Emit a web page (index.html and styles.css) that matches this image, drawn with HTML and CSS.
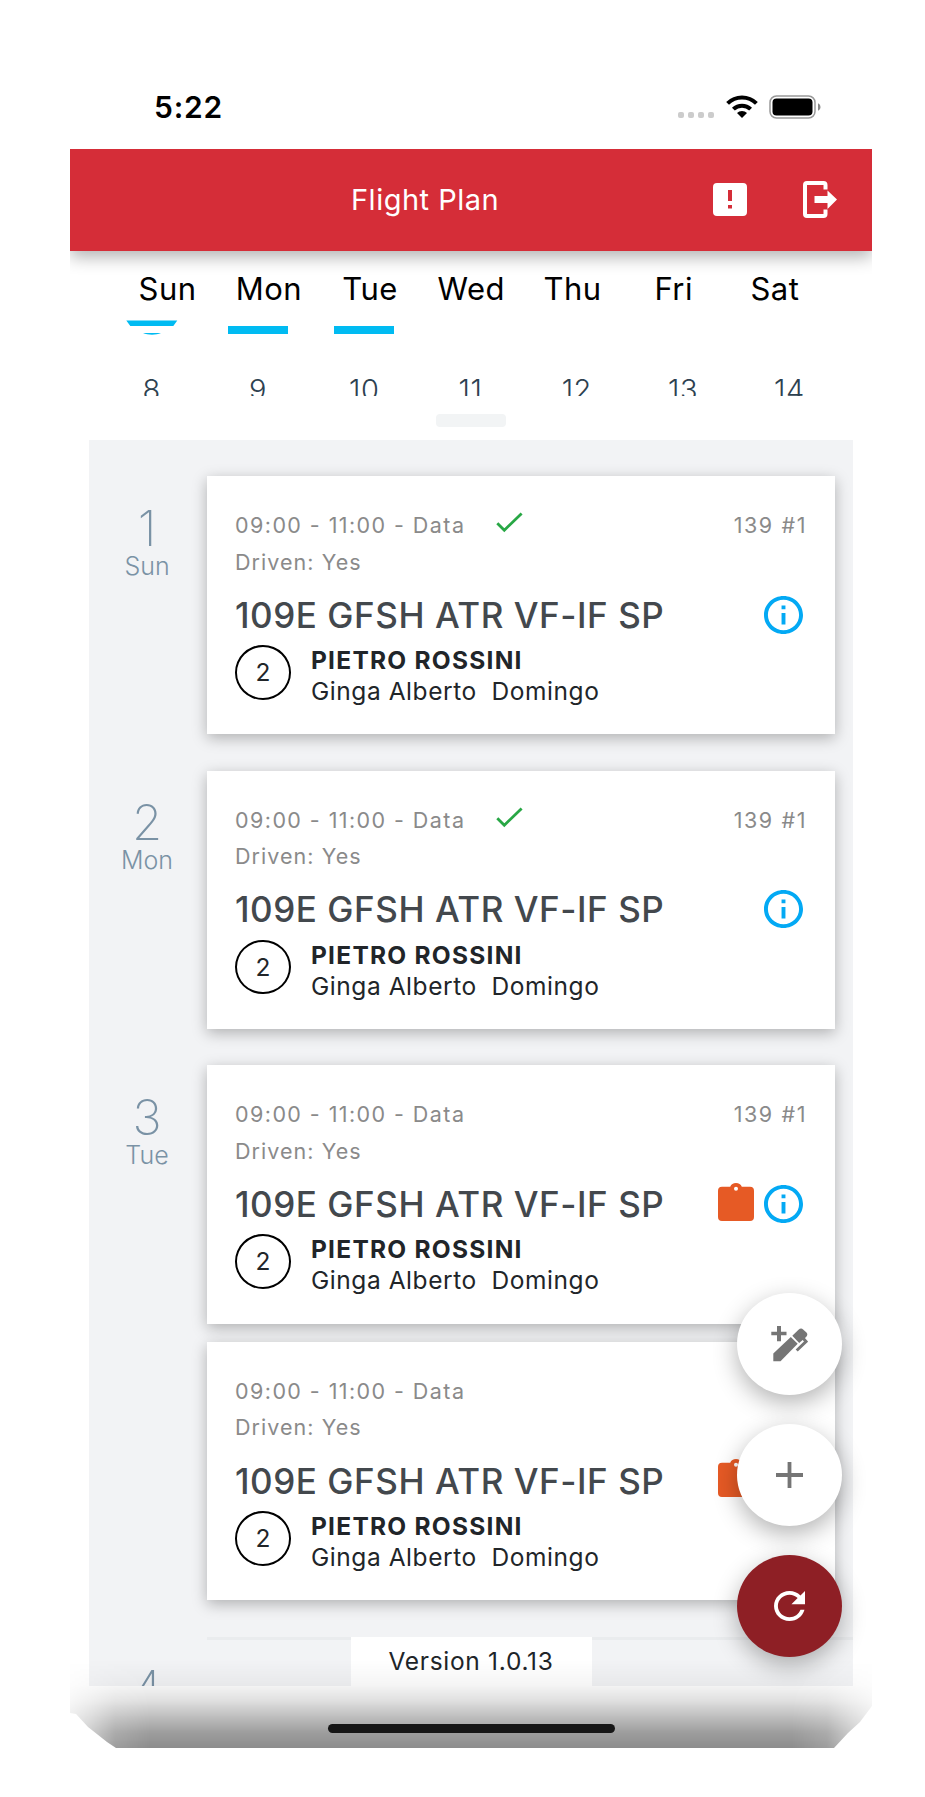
FILE: index.html
```html
<!DOCTYPE html>
<html lang="en">
<head>
    <meta charset="UTF-8">
    <meta name="viewport" content="width=device-width, initial-scale=1.0">
    <title>Flight Plan</title>
    <link rel="stylesheet" href="styles.css">
</head>
<body>
    <!-- Shared icons -->
    <svg class="sprite">
        <symbol id="check" viewBox="0 0 27 21">
            <path d="M1.3 11.2l7 7L25.6 1.4" fill="none" stroke="#28a745" stroke-width="2.8"/>
        </symbol>
        <symbol id="info" viewBox="2 2 20 20" preserveAspectRatio="none">
            <path fill="#03a9f4" d="M11 7h2v2h-2zm0 4h2v6h-2zm1-9C6.48 2 2 6.48 2 12s4.48 10 10 10 10-4.48 10-10S17.52 2 12 2zm0 18c-4.41 0-8-3.59-8-8s3.59-8 8-8 8 3.59 8 8-3.59 8-8 8z"/>
        </symbol>
        <symbol id="clipboard" viewBox="0 0 36 38">
            <path fill="#e65a25" fill-rule="evenodd" d="M4 3.700h8.200c1-2.400 3-3.700 5.800-3.700s4.800 1.300 5.800 3.700H32a4 4 0 0 1 4 4V34a4 4 0 0 1-4 4H4a4 4 0 0 1-4-4V7.700a4 4 0 0 1 4-4zM18 3.800a2 2 0 1 0 0 4 2 2 0 0 0 0-4z"/>
        </symbol>
    </svg>

    <div class="phone">
        <div class="status-bar">
            <span class="clock">5:22</span>
            <div class="status-icons">
                <span class="dots"><i></i><i></i><i></i><i></i></span>
                <svg class="wifi" viewBox="0 0 32 23">
                    <path d="M1.600 8.400a20.400 20.400 0 0 1 28.800 0M7.400 14.200a12.200 12.200 0 0 1 17.200 0" fill="none" stroke="#000" stroke-width="4"/>
                    <path d="M16 23l-5-5a7 7 0 0 1 10 0z"/>
                </svg>
                <svg class="battery" viewBox="0 0 52 24">
                    <rect x="1" y="1" width="45" height="22" rx="6.500" fill="none" stroke="#999" stroke-width="1.500"/>
                    <rect x="3.500" y="3.500" width="40" height="17" rx="4"/>
                    <path d="M49 8.200c3.300 1.500 3.300 6.100 0 7.600z" fill="#888"/>
                </svg>
            </div>
        </div>

        <div class="navbar">
            <h2>Flight Plan</h2>
            <svg class="alert-icon" viewBox="0 0 34 33">
                <path fill="#fff" fill-rule="evenodd" d="M4 0h26a4 4 0 0 1 4 4v25a4 4 0 0 1-4 4H4a4 4 0 0 1-4-4V4a4 4 0 0 1 4-4zM15 7v11h4V7zM15 22v3.500h4V22z"/>
            </svg>
            <svg class="logout-icon" viewBox="0 0 34 37">
                <path d="M22.500 8.500V4a2 2 0 0 0-2-2H4a2 2 0 0 0-2 2v29a2 2 0 0 0 2 2h16.500a2 2 0 0 0 2-2v-4.500" fill="none" stroke="#fff" stroke-width="4"/>
                <path fill="#fff" d="M11.500 15h13V9.500L34 18.500 24.500 28v-6h-13z"/>
            </svg>
        </div>

        <div class="calendar">
            <div class="weekdays">
                <span>Sun</span><span>Mon</span><span>Tue</span><span>Wed</span><span>Thu</span><span>Fri</span><span>Sat</span>
            </div>
            <div class="marks">
                <svg viewBox="0 0 52 16"><path fill="#00bbf2" d="M.300.500h51l-4 5.500h-43zM17 13h18c-5 2.300-13 2.300-18 0z"/></svg>
                <span class="bar"></span>
                <span class="bar"></span>
            </div>
            <div class="dates">
                <span>8</span><span>9</span><span>10</span><span>11</span><span>12</span><span>13</span><span>14</span>
            </div>
            <div class="knob"></div>
        </div>

        <div class="agenda">
            <div class="day">
                <div class="day-label"><b>1</b><span>Sun</span></div>
                <div class="cards">
                    <div class="card">
                        <div class="row meta"><span class="time">09:00 - 11:00 - Data</span><svg class="check"><use href="#check"/></svg><span class="code">139 #1</span></div>
                        <div class="meta driven">Driven: Yes</div>
                        <div class="row title"><h3>109E GFSH ATR VF-IF SP</h3><svg class="info"><use href="#info"/></svg></div>
                        <div class="row crew"><span class="count">2</span><p><strong>PIETRO ROSSINI</strong>Ginga Alberto&nbsp; Domingo</p></div>
                    </div>
                </div>
            </div>
            <div class="day">
                <div class="day-label"><b>2</b><span>Mon</span></div>
                <div class="cards">
                    <div class="card">
                        <div class="row meta"><span class="time">09:00 - 11:00 - Data</span><svg class="check"><use href="#check"/></svg><span class="code">139 #1</span></div>
                        <div class="meta driven">Driven: Yes</div>
                        <div class="row title"><h3>109E GFSH ATR VF-IF SP</h3><svg class="info"><use href="#info"/></svg></div>
                        <div class="row crew"><span class="count">2</span><p><strong>PIETRO ROSSINI</strong>Ginga Alberto&nbsp; Domingo</p></div>
                    </div>
                </div>
            </div>
            <div class="day">
                <div class="day-label"><b>3</b><span>Tue</span></div>
                <div class="cards">
                    <div class="card">
                        <div class="row meta"><span class="time">09:00 - 11:00 - Data</span><span class="code">139 #1</span></div>
                        <div class="meta driven">Driven: Yes</div>
                        <div class="row title"><h3>109E GFSH ATR VF-IF SP</h3><svg class="clipboard"><use href="#clipboard"/></svg><svg class="info"><use href="#info"/></svg></div>
                        <div class="row crew"><span class="count">2</span><p><strong>PIETRO ROSSINI</strong>Ginga Alberto&nbsp; Domingo</p></div>
                    </div>
                    <div class="card">
                        <div class="row meta"><span class="time">09:00 - 11:00 - Data</span></div>
                        <div class="meta driven">Driven: Yes</div>
                        <div class="row title"><h3>109E GFSH ATR VF-IF SP</h3><svg class="clipboard"><use href="#clipboard"/></svg><svg class="info"><use href="#info"/></svg></div>
                        <div class="row crew"><span class="count">2</span><p><strong>PIETRO ROSSINI</strong>Ginga Alberto&nbsp; Domingo</p></div>
                    </div>
                </div>
            </div>
            <div class="day">
                <div class="day-label"><b>4</b></div>
                <div class="cards empty"></div>
            </div>
        </div>

        <div class="version">Version 1.0.13</div>

        <!-- Floating buttons -->
        <div class="fabs">
            <div class="fab">
                <svg width="37" height="36" viewBox="0 0 37 36" fill="#757575">
                    <path d="M6 0h4v5.700h5.500v3.500H10v6H6v-6H.300V5.700H6z"/>
                    <path d="M2.300 27.500L19.800 11l6.900 6.800L9.500 35.300H2.300z"/>
                    <path d="M21.300 9.800l6.200-6c1.700-1.600 3.200-1.700 4.600-.4l3.300 3.200c1.300 1.300 1.200 2.800-.3 4.300l-6.900 6z"/>
                    <path d="M31.500 11.500l3.500 4-9.300 9" fill="none" stroke="#757575" stroke-width="3"/>
                </svg>
            </div>
            <div class="fab">
                <svg width="27" height="26" viewBox="0 0 27 26"><path d="M13.500 0v26M0 13h27" stroke="#757575" stroke-width="3.800"/></svg>
            </div>
            <div class="fab refresh">
                <svg width="31" height="30" viewBox="4 4 16 16" preserveAspectRatio="none"><path fill="#fff" d="M17.650 6.350C16.200 4.900 14.210 4 12 4c-4.420 0-7.990 3.580-7.990 8s3.570 8 7.990 8c3.730 0 6.840-2.550 7.730-6h-2.080c-.82 2.330-3.040 4-5.650 4-3.310 0-6-2.690-6-6s2.690-6 6-6c1.660 0 3.140.69 4.220 1.780L13 11h7V4l-2.350 2.350z"/></svg>
            </div>
        </div>

        <div class="bottom-shade"></div>
        <div class="home-bar"></div>
    </div>
</body>
</html>
```
FILE: styles.css
```css
* {
    box-sizing: border-box;
}
body {
    margin: 0;
    background: #fff;
    font-family: Inter, "Liberation Sans", sans-serif;
    color: #212529;
}
h2, h3, p {
    margin: 0;
}
svg {
    display: block;
    flex-shrink: 0;
}
.sprite {
    position: absolute;
    width: 0;
    height: 0;
}
.phone {
    position: relative;
    width: 802px;
    height: 1748px;
    margin-left: 70px;
    overflow: hidden;
}

/* Status bar */
.status-bar {
    position: relative;
    z-index: 2;
    display: flex;
    justify-content: space-between;
    height: 148.5px;
    padding: 95px 51px 0 84px;
    background: #fff;
    color: #000;
}
.clock {
    font-size: 30px;
    line-height: 25px;
    font-weight: 600;
    letter-spacing: 0.8px;
}
.status-icons {
    display: flex;
    align-items: flex-start;
}
.dots {
    display: flex;
    gap: 4px;
    margin: 17px 12px 0 0;
}
.dots i {
    width: 6px;
    height: 6px;
    border-radius: 2px;
    background: #ccc;
}
.wifi {
    width: 32px;
    height: 23px;
    margin-right: 11px;
}
.battery {
    width: 52px;
    height: 24px;
}

/* Header */
.navbar {
    position: relative;
    display: flex;
    align-items: center;
    height: 102px;
    padding: 0 35px 0 281px;
    background: #d52d38;
    color: #fff;
    box-shadow: 0 6px 16px rgba(0, 0, 0, 0.3);
}
.navbar h2 {
    font-size: 29px;
    font-weight: 400;
    line-height: 40px;
    letter-spacing: 0.5px;
    white-space: nowrap;
}
.alert-icon {
    width: 34px;
    height: 33px;
    margin-left: auto;
    margin-right: 56px;
}
.logout-icon {
    width: 34px;
    height: 37px;
}

/* Week calendar */
.calendar {
    height: 189.5px;
}
.weekdays {
    display: flex;
    margin: 0 46.5px 0 47px;
    padding-top: 19px;
    height: 69.5px;
    color: #000;
    font-size: 31px;
    line-height: 38px;
    letter-spacing: 0.5px;
    text-align: center;
}
.weekdays span,
.dates span {
    flex: 1 1 0;
}
.marks {
    display: flex;
    height: 16px;
    padding-left: 56px;
}
.marks svg {
    width: 52px;
    height: 16px;
    margin-right: 50px;
}
.bar {
    width: 60px;
    height: 7.5px;
    margin: 6.3px 46px 0 0;
    background: #00bbf2;
}
.dates {
    display: flex;
    height: 21px;
    margin: 39px 29.5px 0 28.5px;
    overflow: hidden;
    color: #2d4150;
    font-size: 29px;
    font-weight: 300;
    line-height: 29px;
    letter-spacing: 0.5px;
    text-align: center;
}
.knob {
    width: 70px;
    height: 13px;
    margin: 18px auto 0;
    border-radius: 4px;
    background: #f2f4f5;
}

/* Agenda list */
.agenda {
    width: 764px;
    height: 1246px;
    margin-left: 19px;
    padding-top: 36px;
    overflow: hidden;
    background: #f2f3f5;
}
.day {
    display: flex;
    margin-bottom: 36.5px;
}
.day-label {
    width: 118px;
    padding: 22.5px 2px 0 0;
    text-align: center;
    color: #7a92a5;
}
.day-label b {
    display: block;
    font-size: 49px;
    font-weight: 200;
    line-height: 60px;
}
.day-label span {
    display: block;
    margin-top: -8px;
    font-size: 25px;
    font-weight: 300;
    line-height: 30px;
}
.cards {
    display: flex;
    flex-direction: column;
    gap: 18.3px;
    width: 628px;
}
.cards.empty {
    width: 646px;
    border-top: 3px solid #eaecee;
}
.card {
    height: 258.2px;
    padding: 31px 29px 0 28px;
    background: #fff;
    box-shadow: 0 4px 14px rgba(0, 0, 0, 0.28);
}
.row {
    display: flex;
}
.meta {
    height: 36.5px;
    color: #8a8a8a;
    font-size: 21.5px;
    line-height: 36.5px;
    letter-spacing: 1.43px;
    white-space: nowrap;
}
.driven {
    letter-spacing: 1.05px;
}
.check {
    width: 27px;
    height: 21px;
    margin: 5px 0 0 31px;
}
.code {
    margin-left: auto;
    margin-right: -1px;
    letter-spacing: 1.6px;
}
.title {
    align-items: center;
    height: 46px;
    margin-top: 11.8px;
}
.title h3 {
    margin-right: auto;
    color: #43484d;
    font-size: 35px;
    font-weight: 500;
    line-height: 46px;
    letter-spacing: 0.55px;
    white-space: nowrap;
}
.info {
    width: 39px;
    height: 38px;
    margin: 0 3px 0 10px;
}
.clipboard {
    width: 36px;
    height: 38px;
    margin-top: -5px;
}
.crew {
    margin-top: 7.2px;
}
.count {
    width: 56px;
    height: 54.7px;
    margin-right: 20px;
    border: 2px solid #000;
    border-radius: 50%;
    font-size: 24.5px;
    line-height: 51px;
    text-align: center;
}
.crew p {
    font-size: 24.5px;
    line-height: 31px;
    letter-spacing: 0.55px;
    white-space: nowrap;
}
.crew strong {
    display: block;
    font-weight: 700;
    letter-spacing: 1.25px;
}

/* Overlays */
.version {
    position: absolute;
    left: 280.5px;
    top: 1637px;
    width: 241px;
    height: 60px;
    background: #fff;
    font-size: 24.5px;
    line-height: 48px;
    letter-spacing: 0.7px;
    text-align: center;
}
.fabs {
    position: absolute;
    right: 30px;
    top: 1293px;
    display: flex;
    flex-direction: column;
    gap: 29px;
}
.fab {
    display: flex;
    align-items: center;
    justify-content: center;
    width: 105px;
    height: 102px;
    border-radius: 50%;
    background: #fff;
    box-shadow: 0 8px 24px rgba(0, 0, 0, 0.3);
}
.fab.refresh {
    background: #8e1f25;
}
.bottom-shade {
    position: absolute;
    left: 0;
    right: 0;
    bottom: 0;
    height: 88px;
    background: linear-gradient(rgba(0, 0, 0, 0), rgba(0, 0, 0, 0.04) 28%, rgba(0, 0, 0, 0.12) 46%, rgba(0, 0, 0, 0.26) 65%, rgba(0, 0, 0, 0.38) 82%, rgba(0, 0, 0, 0.45));
    clip-path: polygon(0 0, 100% 0, 100% 46px, 790px 62px, 778px 73px, 764px 88px, 46px 88px, 37px 82px, 18px 67px, 6px 54px, 0 53px);
    -webkit-mask-image: linear-gradient(to right, rgba(0, 0, 0, 0.25), rgba(0, 0, 0, 0.5) 20px, rgba(0, 0, 0, 0.85) 45px, #000 80px, #000 722px, rgba(0, 0, 0, 0.85) 757px, rgba(0, 0, 0, 0.5) 782px, rgba(0, 0, 0, 0.25));
    mask-image: linear-gradient(to right, rgba(0, 0, 0, 0.25), rgba(0, 0, 0, 0.5) 20px, rgba(0, 0, 0, 0.85) 45px, #000 80px, #000 722px, rgba(0, 0, 0, 0.85) 757px, rgba(0, 0, 0, 0.5) 782px, rgba(0, 0, 0, 0.25));
}
.home-bar {
    position: absolute;
    left: 258px;
    bottom: 15px;
    width: 287px;
    height: 9px;
    border-radius: 5px;
    background: #161616;
}
```
